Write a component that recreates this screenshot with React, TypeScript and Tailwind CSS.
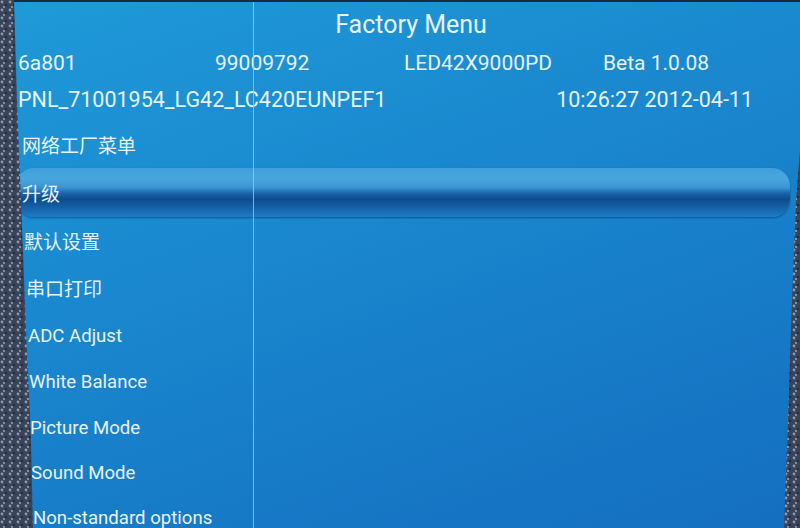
import React from "react";

const items = [
  { t: "网络工厂菜单", pl: "pl-[22px]", h: "h-[48px]", cjk: true },
  { t: "升级", pl: "pl-[22px]", h: "h-[48px]", cjk: true, sel: true },
  { t: "默认设置", pl: "pl-[24px]", h: "h-[47.5px]", cjk: true },
  { t: "串口打印", pl: "pl-[26px]", h: "h-[47px]", cjk: true },
  { t: "ADC Adjust", pl: "pl-[28px]", h: "h-[46.5px]" },
  { t: "White Balance", pl: "pl-[29px]", h: "h-[46px]" },
  { t: "Picture Mode", pl: "pl-[30px]", h: "h-[45.5px]" },
  { t: "Sound Mode", pl: "pl-[31px]", h: "h-[45px]" },
  { t: "Non-standard options", pl: "pl-[33px]", h: "h-[45px]" },
];

export default function App() {
  return (
    <div
      className="relative w-[800px] h-[528px] overflow-hidden bg-[linear-gradient(160deg,#1f9ad8_0%,#1a88cf_40%,#146ec0_100%)] text-[#e6f3fb]"
      style={{ fontFamily: '"Roboto", "Noto Sans CJK SC", sans-serif' }}
    >
      <div className="flex flex-col">
        <div className="h-[46px] flex items-center justify-center pt-[4px] pl-[22px] text-[25px]">
          Factory Menu
        </div>
        <div className="h-[36px] flex items-center text-[21px] pl-[18px]">
          <span className="w-[197px]">6a801</span>
          <span className="w-[189px]">99009792</span>
          <span className="w-[199px]">LED42X9000PD</span>
          <span>Beta 1.0.08</span>
        </div>
        <div className="h-[36px] flex items-center justify-between text-[21.5px] pl-[18px] pr-[47px]">
          <span>PNL_71001954_LG42_LC420EUNPEF1</span>
          <span>10:26:27 2012-04-11</span>
        </div>
        <div className="mt-[5px] flex flex-col">
          {items.map((it) => (
            <div key={it.t} className={`relative ${it.h} flex items-center`}>
              {it.sel && (
                <div className="absolute left-[16px] right-[10px] top-[-3px] h-[49px] rounded-[18px] bg-[linear-gradient(180deg,#3e9fdc_0%,#4aa6de_22%,#3a94d4_40%,#1a63a8_52%,#0e4b8c_64%,#1560a8_80%,#1c7cc6_100%)] shadow-[0_1px_2px_rgba(0,40,90,0.5)]" />
              )}
              <span
                className={`relative ${it.pl} ${it.cjk ? "text-[19px]" : "text-[18.6px]"}`}
              >
                {it.t}
              </span>
            </div>
          ))}
        </div>
      </div>
      <div className="absolute left-[253px] top-0 w-px h-full bg-[#7fd2f2] opacity-80" />
      <div className="absolute left-0 top-0 w-full h-[2px] bg-[#1b2a3a]" />
      <svg className="absolute left-0 top-0" width="800" height="528">
        <defs>
          <pattern id="spk" width="8" height="8" patternUnits="userSpaceOnUse">
            <rect width="8" height="8" fill="#3a4458" />
            <circle cx="2" cy="2" r="1.4" fill="#8a98b0" />
            <circle cx="6" cy="5" r="1.1" fill="#1e2433" />
            <circle cx="4" cy="7" r="0.9" fill="#a8b4c8" />
          </pattern>
        </defs>
        <polygon points="0,0 14,0 17,100 21,200 26,330 31,440 33,528 0,528" fill="url(#spk)" />
        <polygon points="800,150 796,200 792,300 788,420 784,528 800,528" fill="url(#spk)" />
      </svg>
    </div>
  );
}
